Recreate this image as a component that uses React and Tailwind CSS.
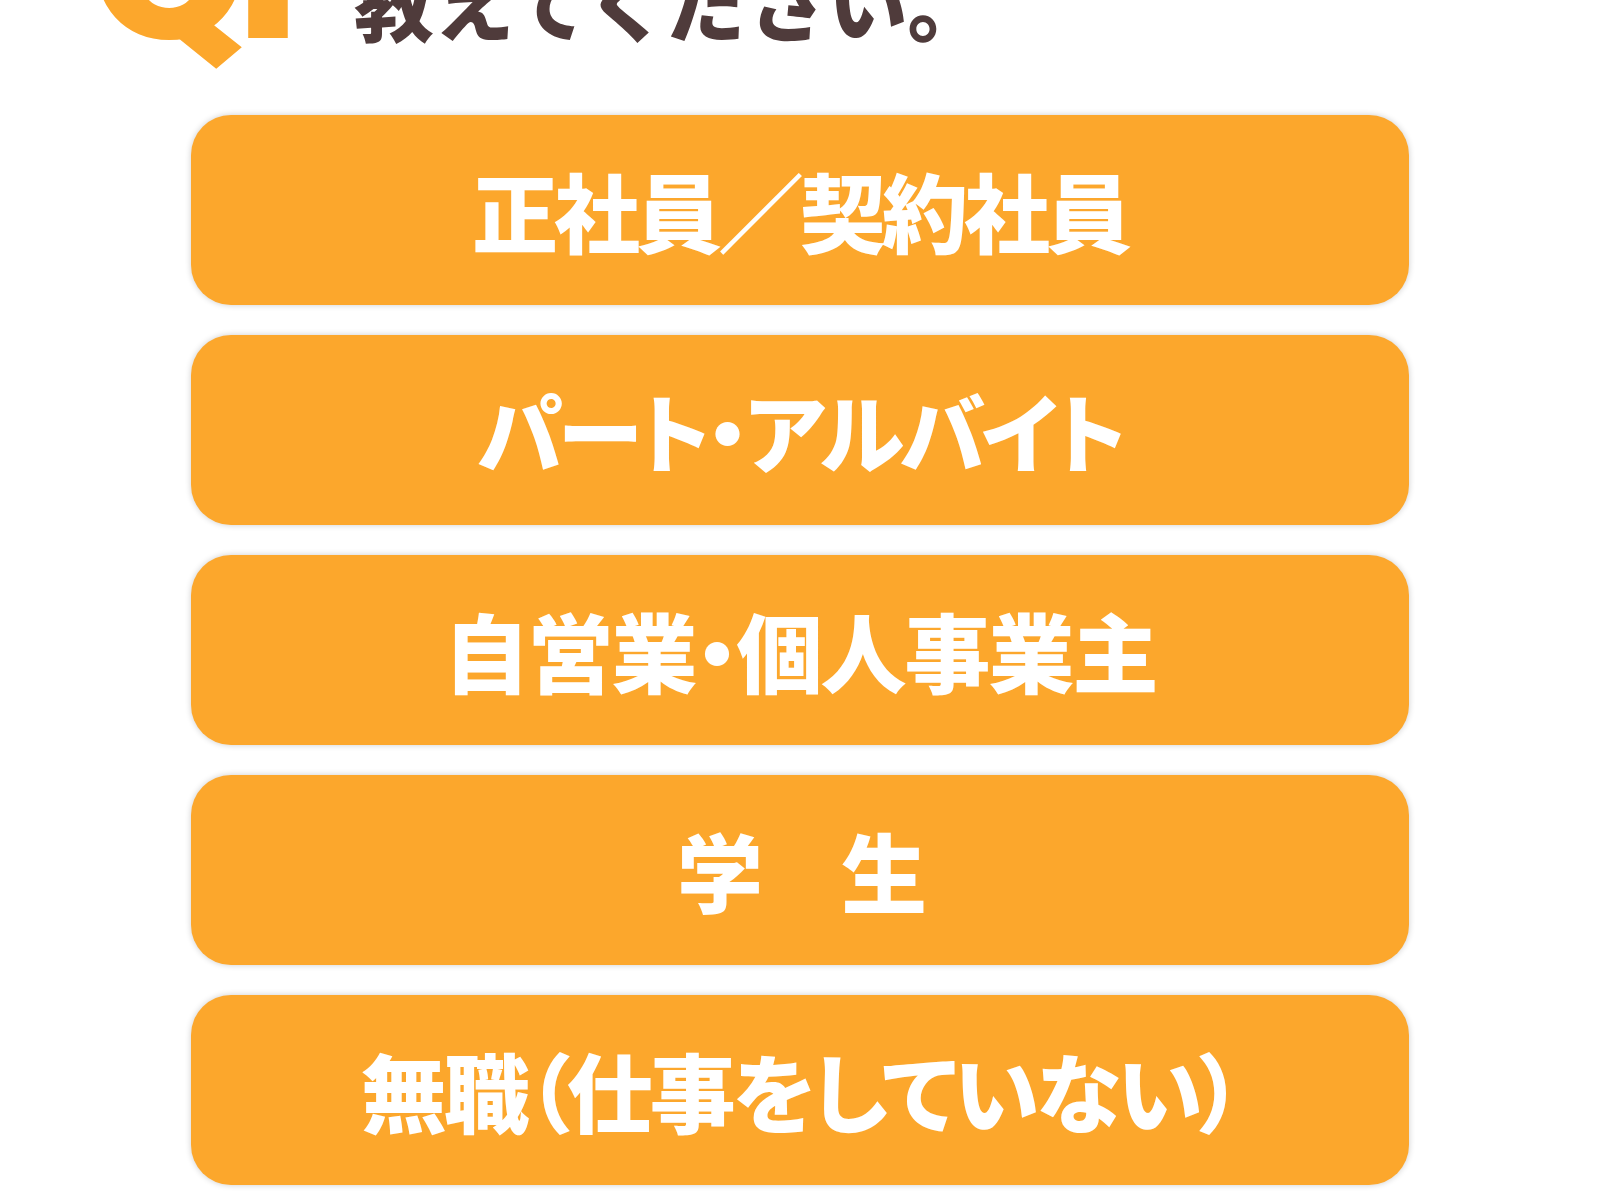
const OPTIONS = [
  { label: '正社員／契約社員', cls: 'tracking-[-4px]' },
  { label: 'パート・アルバイト', cls: 'tracking-[-4px] [font-feature-settings:"palt"]' },
  { label: '自営業・個人事業主', cls: 'tracking-[-2px] [font-feature-settings:"palt"]' },
  { label: '学　生', cls: 'tracking-[-4px]' },
  { label: '無職（仕事をしていない）', cls: 'tracking-[-3px] [font-feature-settings:"palt"]' },
];

const App = () => {
  return (
    <div className="w-[1600px] h-[1200px] overflow-hidden bg-white">
      {/* Question header (cut off at top) */}
      <div className="-mt-[164px] flex items-baseline leading-none pl-[86px]">
        <span className="w-[268px] shrink-0 text-[240px] font-black text-[#fca72c] font-['Roboto',sans-serif]">
          <span className="tracking-[-62px]">Q</span>1
        </span>
        <span className="relative -top-[3px] text-[80px] font-black text-[#4f3b3b] font-['Noto_Sans_CJK_JP',sans-serif]">
          教えてください。
        </span>
      </div>

      {/* Answer buttons */}
      <div className="mt-[39px] flex flex-col gap-[30px] items-center">
        {OPTIONS.map((opt) => (
          <button
            key={opt.label}
            className="w-[1218px] h-[190px] rounded-[40px] bg-[#fca72c] shadow-[0_0_6px_rgba(0,0,0,0.2)] flex items-center justify-center"
          >
            <span
              className={`text-[86px] font-black text-white leading-none font-['Noto_Sans_CJK_JP',sans-serif] ${opt.cls}`}
            >
              {opt.label}
            </span>
          </button>
        ))}
      </div>
    </div>
  );
};

export default App;
